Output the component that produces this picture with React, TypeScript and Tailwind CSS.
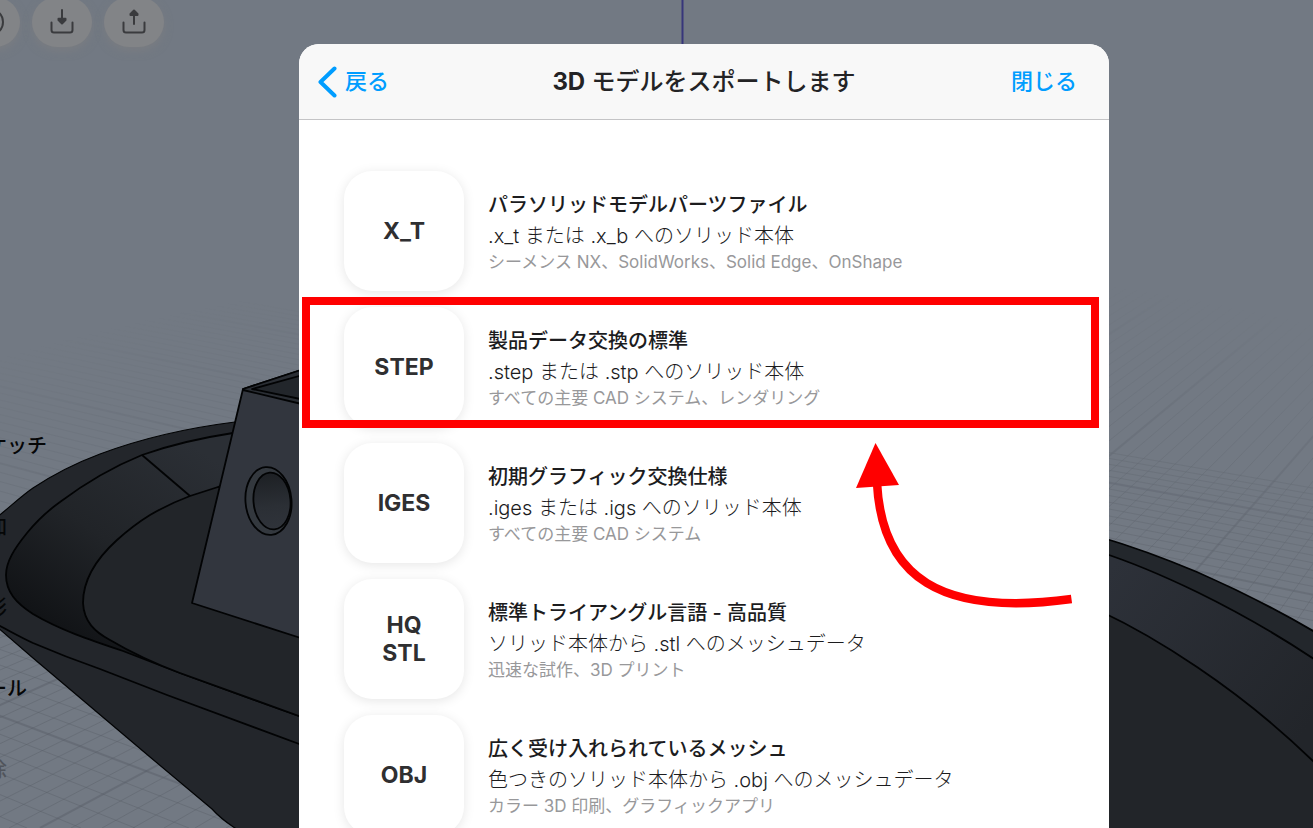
import { useState } from "react"

type ExportFormat = {
  id: string
  badge: string[]
  title: string
  detail: string
  apps: string
}

const FORMATS: ExportFormat[] = [
  {
    id: "xt",
    badge: ["X_T"],
    title: "パラソリッドモデルパーツファイル",
    detail: ".x_t または .x_b へのソリッド本体",
    apps: "シーメンス NX、SolidWorks、Solid Edge、OnShape",
  },
  {
    id: "step",
    badge: ["STEP"],
    title: "製品データ交換の標準",
    detail: ".step または .stp へのソリッド本体",
    apps: "すべての主要 CAD システム、レンダリング",
  },
  {
    id: "iges",
    badge: ["IGES"],
    title: "初期グラフィック交換仕様",
    detail: ".iges または .igs へのソリッド本体",
    apps: "すべての主要 CAD システム",
  },
  {
    id: "stl",
    badge: ["HQ", "STL"],
    title: "標準トライアングル言語 - 高品質",
    detail: "ソリッド本体から .stl へのメッシュデータ",
    apps: "迅速な試作、3D プリント",
  },
  {
    id: "obj",
    badge: ["OBJ"],
    title: "広く受け入れられているメッシュ",
    detail: "色つきのソリッド本体から .obj へのメッシュデータ",
    apps: "カラー 3D 印刷、グラフィックアプリ",
  },
]

const TOOLS = [
  { label: "スケッチ", enabled: true },
  { label: "追加", enabled: true },
  { label: "変形", enabled: true },
  { label: "ツール", enabled: true },
  { label: "削除", enabled: false },
]

// Ground grid: two families of lines, each running to its own vanishing point
const FLOOR_Y = 828
const FAMILIES = [
  { vx: 1792, vy: -110, start: 40, step: 31, from: -30, to: 90 },
  { vx: -2240, vy: -130, start: 297, step: 54, from: -8, to: 56 },
]

function GroundGrid() {
  return (
    <g stroke="#565b64" mask="url(#gridFade)">
      {FAMILIES.map((f) =>
        Array.from({ length: f.to - f.from }).map((_, n) => {
          const i = n + f.from
          const major = i % 10 === 0
          return (
            <line
              key={`${f.vx}-${i}`}
              x1={f.vx}
              y1={f.vy}
              x2={f.start + i * f.step}
              y2={FLOOR_Y}
              strokeWidth={major ? 2 : 1}
              strokeOpacity={major ? 0.4 : 0.36}
            />
          )
        })
      )}
    </g>
  )
}

function Scene() {
  return (
    <svg
      viewBox="0 0 1313 828"
      preserveAspectRatio="xMidYMin slice"
      className="absolute inset-0 h-full w-full"
      aria-hidden="true"
    >
      <defs>
        <radialGradient id="fade" cx="720" cy="2855" r="2600" gradientUnits="userSpaceOnUse">
          <stop offset="0.88" stopColor="#fff" />
          <stop offset="0.95" stopColor="#888" />
          <stop offset="1" stopColor="#000" />
        </radialGradient>
        <mask id="gridFade" maskUnits="userSpaceOnUse" x="0" y="0" width="1313" height="828">
          <rect width="1313" height="828" fill="url(#fade)" />
        </mask>
        <linearGradient id="wall" x1="200" y1="450" x2="70" y2="640" gradientUnits="userSpaceOnUse">
          <stop offset="0" stopColor="#2b2f35" />
          <stop offset="0.55" stopColor="#212428" />
          <stop offset="1" stopColor="#111316" />
        </linearGradient>
        <linearGradient id="wallRight" x1="1110" y1="570" x2="1313" y2="720" gradientUnits="userSpaceOnUse">
          <stop offset="0" stopColor="#2d3139" />
          <stop offset="1" stopColor="#22252a" />
        </linearGradient>
        <linearGradient id="port" x1="0" y1="473" x2="0" y2="529" gradientUnits="userSpaceOnUse">
          <stop offset="0" stopColor="#1d2024" />
          <stop offset="0.6" stopColor="#2b2f35" />
          <stop offset="1" stopColor="#2f333a" />
        </linearGradient>
      </defs>

      <GroundGrid />
      <path d="M682.5 0V60" stroke="#37367a" strokeWidth="2" />

      {/* Hull, bow side */}
      <g stroke="#020304" strokeWidth="1.8" strokeLinejoin="round">
        <path
          d="M-4 518C10 507 20 497 33 488C54 474 76 463 100 454C140 439 187 428 235 422L310 414V850H260L235 828C226 822 221 819 212 809L150 757L33 658L-4 626Z"
          fill="#23262b"
          strokeWidth="1.2"
        />
        <path d="M-4 624C8 630 20 637 33 643C54 652 77 661 100 669L167 695L310 748" fill="none" />
        <path
          d="M233 433C200 438 170 445 142 455C110 468 84 484 60 502C46 512 36 522 27 533C14 549 6 562 6 575C6 592 16 603 33 614C60 630 90 640 123 651L180 673L310 720V425Z"
          fill="url(#wall)"
        />
        <path
          d="M218 487L190 496C174 502 162 508 150 515C137 523 127 531 117 540C96 559 83 581 83 603C84 622 95 632 110 640C132 653 156 664 180 673L310 720V470Z"
          fill="#222529"
        />
        <path d="M142 455L190 496" />
        <path d="M243 389L310 367V641L192 603Z" fill="#32363e" />
        <path d="M243 389L310 367V406L243 390Z" fill="#2a2e34" />
        <path d="M252 389L310 373V401Z" fill="#22262b" />
        <ellipse cx="268.500" cy="501" rx="23" ry="34" fill="#33383e" transform="rotate(-5 268.500 501)" />
        <ellipse cx="272" cy="501" rx="18.500" ry="28.500" fill="url(#port)" transform="rotate(-5 272 501)" />
      </g>

      {/* Hull, stern side */}
      <g stroke="#020304" strokeWidth="1.8">
        <path d="M1100 537C1134 547 1166 559 1197 572C1238 590 1278 610 1320 635V840H1100Z" fill="#23272c" />
        <path d="M1100 552C1134 563 1166 577 1197 592C1240 613 1280 636 1320 663V840H1100Z" fill="url(#wallRight)" />
        <path d="M1100 611C1134 627 1166 646 1197 667C1240 696 1280 728 1320 768V840H1100Z" fill="#222529" />
      </g>
    </svg>
  )
}

function TrayIcon({ direction }: { direction: "down" | "up" }) {
  return (
    <svg
      viewBox="0 0 28 28"
      className="size-7"
      fill="none"
      stroke="#3a3b3e"
      strokeWidth="2"
      strokeLinecap="round"
      strokeLinejoin="round"
      aria-hidden="true"
    >
      <path d="M3.500 14.500V22a2.500 2.500 0 0 0 2.500 2.500H22a2.500 2.500 0 0 0 2.500-2.500V14.500" />
      {direction === "down" ? (
        <>
          <path d="M14 2V12" />
          <path d="M10.500 10.800H17.500V12L14 15.500L10.500 12Z" fill="#3a3b3e" />
        </>
      ) : (
        <>
          <path d="M14 6V16" />
          <path d="M14 2.500L17.500 6V7H10.500V6Z" fill="#3a3b3e" />
        </>
      )}
    </svg>
  )
}

const roundButton =
  "flex h-[50px] w-[60px] shrink-0 items-center justify-center rounded-full bg-[#828487] shadow-[0_4px_8px_rgba(130,128,128,0.5)]"

function TopBar() {
  return (
    <div className="absolute -top-[3px] -left-10 flex gap-3">
      <button type="button" aria-label="ヘルプ" className={roundButton}>
        <svg viewBox="0 0 28 28" className="size-7" fill="none" stroke="#3a3b3e" strokeWidth="2" aria-hidden="true">
          <circle cx="14" cy="14" r="13" />
        </svg>
      </button>
      <button type="button" aria-label="インポート" className={roundButton}>
        <TrayIcon direction="down" />
      </button>
      <button type="button" aria-label="エクスポート" className={roundButton}>
        <TrayIcon direction="up" />
      </button>
    </div>
  )
}

function ToolMenu() {
  return (
    <nav className="absolute top-[430px] -left-[33px] flex flex-col items-start gap-[49px] text-xl leading-8 font-medium">
      {TOOLS.map(({ label, enabled }) => (
        <button
          key={label}
          type="button"
          disabled={!enabled}
          className={enabled ? "whitespace-nowrap text-[#050607]" : "whitespace-nowrap text-[#50545b]"}
        >
          {label}
        </button>
      ))}
    </nav>
  )
}

function Highlight() {
  return (
    <>
      <div className="pointer-events-none absolute -top-[10px] right-[10px] -bottom-px left-[3px] border-8 border-[#ff0000]" />
      <svg
        viewBox="0 0 220 170"
        className="pointer-events-none absolute top-[136px] left-[557px] h-[170px] w-[220px]"
        aria-hidden="true"
      >
        <path d="M21 40C26 134 84 174 215.500 156" fill="none" stroke="#ff0000" strokeWidth="8.500" />
        <path d="M19.500 0L43 42L0 45Z" fill="#ff0000" />
      </svg>
    </>
  )
}

function FormatRow({ format, highlighted, onSelect }: { format: ExportFormat; highlighted: boolean; onSelect: () => void }) {
  return (
    <li className={highlighted ? "relative z-10 px-[45px]" : "px-[45px]"}>
      <button type="button" onClick={onSelect} className="flex w-full items-center gap-6 text-left">
        <span className="flex size-[120px] shrink-0 flex-col items-center justify-center rounded-[28px] bg-white text-[23px] leading-7 font-bold text-[#2f2f31] shadow-[0_2px_12px_rgba(0,0,0,0.1)]">
          {format.badge.map((line) => (
            <span key={line}>{line}</span>
          ))}
        </span>
        <span className="flex min-w-0 flex-col whitespace-nowrap">
          <span className="text-xl leading-[30px] font-medium text-[#1c1c1e]">{format.title}</span>
          <span className="text-xl leading-8 font-light text-[#1c1c1e]">{format.detail}</span>
          <span className="text-[17px] leading-5 font-normal text-[#98989a]">{format.apps}</span>
        </span>
      </button>
      {highlighted && <Highlight />}
    </li>
  )
}

export default function App() {
  const [selected, setSelected] = useState("step")

  return (
    <main
      lang="ja"
      className="relative h-screen overflow-hidden bg-[#727983] pt-11 pr-[204px] pl-[299px] font-['Inter','Noto_Sans_CJK_JP',sans-serif]"
    >
      <Scene />
      <TopBar />
      <ToolMenu />

      <section role="dialog" aria-labelledby="export-title" className="relative overflow-hidden rounded-t-[20px] bg-white">
        <header className="grid h-[76px] grid-cols-[1fr_auto_1fr] items-center border-b border-[#c4c4c6] bg-[#f8f8f8]">
          <button type="button" className="flex items-center gap-2 justify-self-start pl-[19px] text-[22px] font-medium text-[#009dff]">
            <svg viewBox="0 0 19 32" className="h-8 w-[19px]" fill="none" stroke="currentColor" strokeWidth="4" strokeLinecap="round" strokeLinejoin="round" aria-hidden="true">
              <path d="M16.500 2.500L2.500 16L16.500 29.500" />
            </svg>
            戻る
          </button>
          <h1 id="export-title" className="text-2xl font-medium text-[#232325]">
            <span className="font-bold">3D</span> モデルをスポートします
          </h1>
          <button type="button" className="justify-self-end pr-8 text-[22px] font-medium text-[#009dff]">
            閉じる
          </button>
        </header>

        <ul className="flex flex-col gap-4 pt-[51px] pb-12">
          {FORMATS.map((format) => (
            <FormatRow
              key={format.id}
              format={format}
              highlighted={format.id === selected}
              onSelect={() => setSelected(format.id)}
            />
          ))}
        </ul>
      </section>
    </main>
  )
}
